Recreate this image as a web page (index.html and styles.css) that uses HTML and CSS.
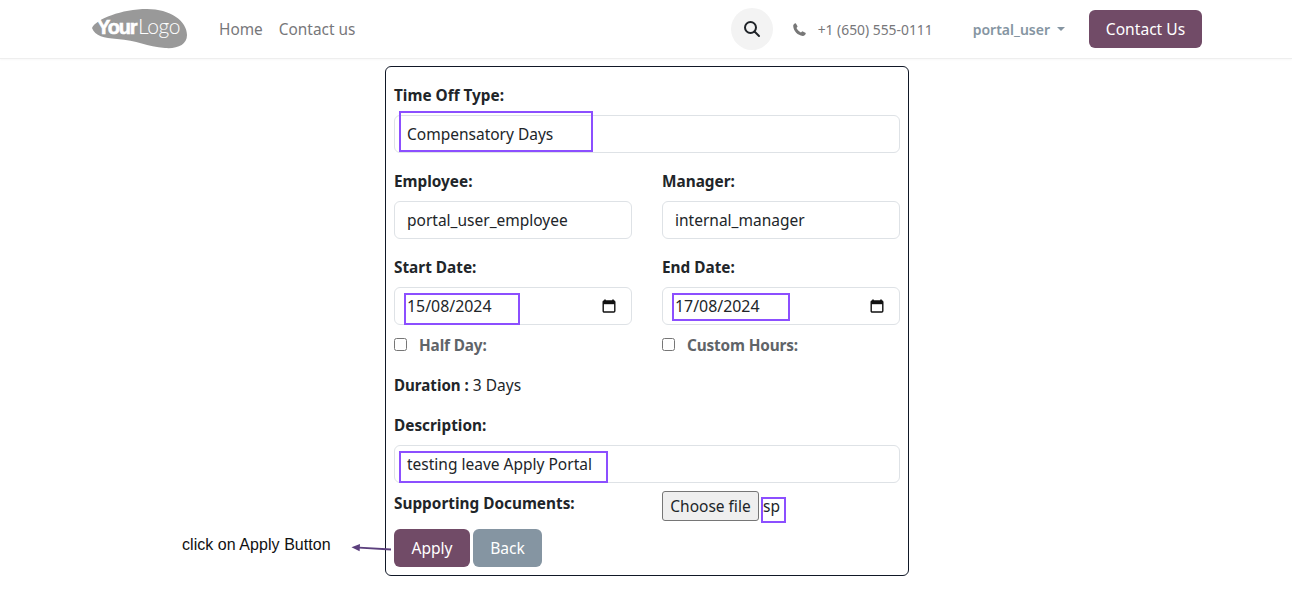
FILE: index.html

```html
<!DOCTYPE html>
<html>
<head>
    <title>Time Off Request</title>
    <link rel="stylesheet" href="styles.css">
</head>
<body>
    <header class="topbar">
        <div class="topbar-inner">
            <svg class="logo" width="95" height="40" viewBox="0 0 95 40">
                <path d="M0 19 C4 10 30 0 55 0 C78 0 95 12 95 26 C95 36 85 40 73 39 C55 38 45 31 25 30 C12 29 3 27 0 19 Z" fill="#999999"/>
                <text class="logo-your" x="5" y="25">Your</text>
                <text class="logo-logo" x="46" y="25">Logo</text>
            </svg>
            <nav class="nav">
                <a>Home</a>
                <a>Contact us</a>
            </nav>
            <div class="search-btn">
                <svg width="18" height="18" viewBox="0 0 18 18" fill="none" stroke="#1f2328" stroke-width="2">
                    <circle cx="7.5" cy="7.5" r="5.5"/>
                    <path d="M11.5 11.5 L16 16" stroke-linecap="round"/>
                </svg>
            </div>
            <div class="phone">
                <svg width="13" height="13" viewBox="0 0 13 13">
                    <path d="M2.8 0.3 L4.6 3.6 L3.5 5 C4.3 6.7 5.9 8.4 7.9 9.4 L9.4 8.2 L12.8 10 C12.7 11.6 11.4 12.9 9.8 12.9 C4.6 12.4 0.7 8.2 0.2 3 C0.2 1.6 1.2 0.6 2.8 0.3 Z" fill="#777777"/>
                </svg>
                <span class="phone-num">+1 (650) 555-0111</span>
            </div>
            <div class="user">portal_user<span class="caret"></span></div>
            <a class="btn btn-brand contact-btn">Contact Us</a>
        </div>
    </header>

    <main class="page">
        <form class="card">
            <div class="field">
                <label>Time Off Type:</label>
                <div class="control">Compensatory Days<span class="mark mark-type"></span></div>
            </div>
            <div class="row">
                <div class="field">
                    <label>Employee:</label>
                    <div class="control">portal_user_employee</div>
                </div>
                <div class="field">
                    <label>Manager:</label>
                    <div class="control">internal_manager</div>
                </div>
            </div>
            <div class="row">
                <div class="col">
                    <div class="field field-date">
                        <label>Start Date:</label>
                        <div class="control control-date">15/08/2024
                            <svg class="cal" width="14" height="14" viewBox="0 0 14 14"><path d="M3 0.5 V2 M11 0.5 V2" stroke="#111" stroke-width="1.6"/><rect x="1.2" y="2" width="11.6" height="11" rx="1" fill="none" stroke="#111" stroke-width="1.4"/><rect x="1.2" y="2" width="11.6" height="3.2" fill="#111"/></svg>
                            <span class="mark mark-start"></span>
                        </div>
                    </div>
                    <div class="check"><input type="checkbox"><span>Half Day:</span></div>
                </div>
                <div class="col">
                    <div class="field field-date">
                        <label>End Date:</label>
                        <div class="control control-date">17/08/2024
                            <svg class="cal" width="14" height="14" viewBox="0 0 14 14"><path d="M3 0.5 V2 M11 0.5 V2" stroke="#111" stroke-width="1.6"/><rect x="1.2" y="2" width="11.6" height="11" rx="1" fill="none" stroke="#111" stroke-width="1.4"/><rect x="1.2" y="2" width="11.6" height="3.2" fill="#111"/></svg>
                            <span class="mark mark-end"></span>
                        </div>
                    </div>
                    <div class="check"><input type="checkbox"><span>Custom Hours:</span></div>
                </div>
            </div>
            <p class="duration"><b>Duration :</b> 3 Days</p>
            <div class="field field-desc">
                <label>Description:</label>
                <div class="control">testing leave Apply Portal<span class="mark mark-desc"></span></div>
            </div>
            <div class="row row-docs">
                <label>Supporting Documents:</label>
                <div class="file">
                    <button type="button" class="file-btn">Choose file</button>
                    <span class="file-name">sp</span>
                </div>
            </div>
            <div class="actions">
                <a class="btn btn-brand">Apply</a>
                <a class="btn btn-back">Back</a>
            </div>
        </form>
    </main>

    <div class="note">click on Apply Button</div>
    <svg class="note-arrow" width="42" height="10" viewBox="0 0 42 10">
        <path d="M40 6.5 L8 4.6" stroke="#5b3f7d" stroke-width="1.8"/>
        <path d="M0.5 4.2 L9 1 L8.6 8.2 Z" fill="#5b3f7d"/>
    </svg>
</body>
</html>
```

FILE: styles.css

```css
body {
    margin: 0;
    background: #fff;
    color: #212529;
    font-family: "Noto Sans", "Open Sans", sans-serif;
    font-size: 15.5px;
    line-height: 24px;
}

.topbar {
    height: 58px;
    border-bottom: 1px solid #eeeeee;
    box-shadow: 0 1px 2px rgba(0, 0, 0, 0.03);
}

.topbar-inner {
    width: 1110px;
    height: 58px;
    margin: 0 auto;
    padding-left: 2px;
    display: flex;
    align-items: center;
}

.logo { margin-top: -1px; }
.logo-your { font-family: "Liberation Sans", sans-serif; font-weight: bold; font-size: 20px; letter-spacing: -1.2px; fill: #fff; stroke: #fff; stroke-width: 0.6px; }
.logo-logo { font-family: "Lato", sans-serif; font-weight: 300; font-size: 21px; letter-spacing: -0.4px; fill: #fff; }

.nav {
    display: flex;
    gap: 16px;
    margin-left: 32px;
    padding-top: 2px;
    color: #77777a;
    font-size: 15.4px;
}

.search-btn {
    width: 42px;
    height: 42px;
    border-radius: 50%;
    background: #f3f3f3;
    display: flex;
    align-items: center;
    justify-content: center;
    margin-left: auto;
}

.phone {
    display: flex;
    align-items: center;
    gap: 12px;
    margin-left: 20px;
    color: #77777a;
    font-size: 13.85px;
}

.phone-num { padding-top: 2px; }

.user {
    display: flex;
    align-items: center;
    margin-left: 40px;
    padding-top: 2px;
    color: #8595a2;
    font-size: 14px;
    font-weight: 600;
}

.caret {
    margin-left: 7px;
    margin-top: -2px;
    border-top: 4px solid #8595a2;
    border-left: 4px solid transparent;
    border-right: 4px solid transparent;
}

.btn {
    height: 38px;
    padding: 0 16px;
    border-radius: 6px;
    color: #fff;
    display: inline-flex;
    align-items: center;
    justify-content: center;
    box-sizing: border-box;
    font-size: 15.6px;
}

.btn-brand { background: #714b67; }
.btn-back { background: #8595a2; }

.contact-btn {
    width: 113px;
    margin-left: 24px;
}

.page {
    display: flex;
    justify-content: center;
    padding: 7px 0 24px 2px;
}

.card {
    width: 524px;
    box-sizing: border-box;
    padding: 16px 8px 8px;
    border: 1px solid #111827;
    border-radius: 6px;
}

label {
    display: block;
    font-weight: 700;
    font-size: 15.35px;
}

.field { margin-bottom: 16px; }
.field label { margin-bottom: 8px; }
.field-date { margin-bottom: 8px; }
.field-desc { margin-bottom: 8px; }

.control {
    position: relative;
    height: 38px;
    box-sizing: border-box;
    padding: 0 12px;
    border: 1px solid #dee2e6;
    border-radius: 6px;
    display: flex;
    align-items: center;
}

.control-date {
    justify-content: space-between;
    font-size: 15.9px;
}

.cal { margin-right: 3px; }

.row {
    display: grid;
    grid-template-columns: 238px 238px;
    column-gap: 30px;
}

.check {
    display: flex;
    align-items: center;
    height: 24px;
    margin-bottom: 16px;
    color: #5f6469;
    font-weight: 700;
    font-size: 15.35px;
    letter-spacing: -0.15px;
}

.check input {
    width: 13px;
    height: 13px;
    margin: -1px 12px 0 0;
}

.duration {
    margin: 0 0 16px;
}

.duration b { font-size: 15.1px; }

.row-docs {
    height: 30px;
    margin-bottom: 8px;
}

.file {
    display: flex;
    align-items: flex-start;
}

.file-btn {
    width: 97px;
    height: 30px;
    padding: 0;
    background: #efefef;
    border: 1px solid #767676;
    border-radius: 3px;
    color: #212529;
    font: inherit;
}

.file-name {
    width: 25px;
    height: 26px;
    box-sizing: border-box;
    margin: 6px 0 0 2px;
    border: 2px solid #8c4fff;
    line-height: 14px;
}

.actions {
    display: flex;
    gap: 3px;
}

.actions .btn-brand { width: 76px; }
.actions .btn-back { width: 69px; }

/* purple annotation boxes drawn over the form */
.mark {
    position: absolute;
    box-sizing: border-box;
    border: 2px solid #8c4fff;
}

.mark-type { left: 4px; top: -5px; width: 194px; height: 41px; }
.mark-start { left: 9px; top: 5px; width: 116px; height: 32px; }
.mark-end { left: 9px; top: 5px; width: 118px; height: 28px; }
.mark-desc { left: 4px; top: 5px; width: 209px; height: 32px; }

.note {
    position: absolute;
    left: 182px;
    top: 536px;
    font-family: "Liberation Sans", sans-serif;
    font-size: 16px;
    letter-spacing: 0.05px;
    line-height: 18px;
    color: #111;
}

.note-arrow {
    position: absolute;
    left: 351px;
    top: 543px;
}
```
